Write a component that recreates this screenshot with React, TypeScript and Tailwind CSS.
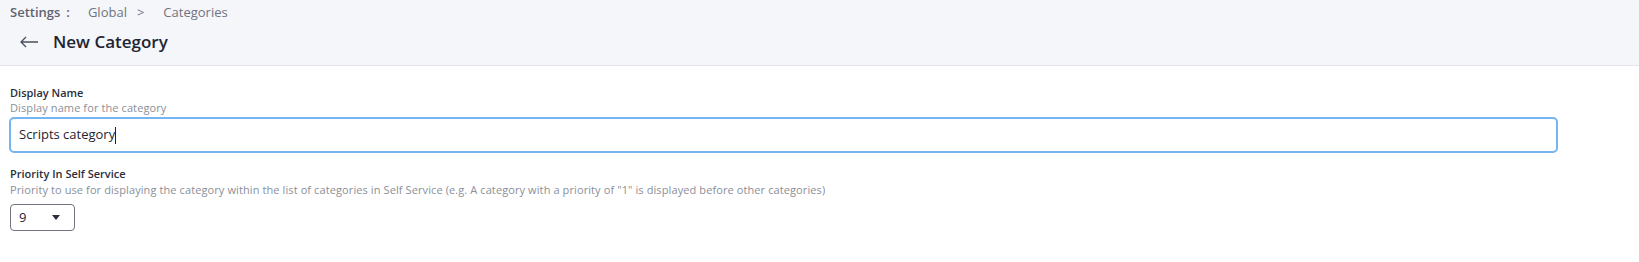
export default function App() {
  return (
    <div className="w-[1639px] h-[262px] bg-white text-[#1f2433]" style={{ fontFamily: '"Open Sans", "Lato", sans-serif' }}>
      {/* Page header */}
      <div className="h-[66px] bg-[#f5f6fa] border-b border-[#e3e5ea] px-[10px] pt-[3px]">
        <div className="flex items-center text-[13px] leading-[18px] text-[#6f7480]">
          <span className="font-semibold text-[#5f6470]">Settings</span>
          <span className="ml-[6px] font-semibold text-[#5f6470]">:</span>
          <span className="ml-[18px]">Global</span>
          <span className="ml-[10px]">&gt;</span>
          <span className="ml-[19px]">Categories</span>
        </div>
        <div className="flex items-center mt-[9px]">
          <svg width="20" height="12" viewBox="0 0 20 12" className="ml-[9px] text-[#4a4f5c]">
            <path d="M19 6H2M7 1L2 6l5 5" fill="none" stroke="currentColor" strokeWidth="1.3" />
          </svg>
          <h1 className="ml-[14px] text-[17px] leading-[24px] font-semibold text-[#1f2433]">New Category</h1>
        </div>
      </div>

      {/* Form */}
      <div className="px-[9px] pt-[20px]">
        <div className="text-[11px] leading-[14px] font-semibold text-[#2b2f3a] pl-[1px]">Display Name</div>
        <div className="text-[11px] leading-[15px] tracking-[0.1px] text-[#8a8f99] pl-[1px]">Display name for the category</div>
        <div className="mt-[2px] w-[1549px] h-[36px] border-2 border-[#75b5f4] rounded-[5px] flex items-center px-[8px]">
          <span className="text-[13px] text-[#1f2433]">Scripts category</span>
          <span className="w-px h-[17px] bg-[#1f2433]" />
        </div>

        <div className="mt-[14px] text-[11px] leading-[14px] font-semibold text-[#2b2f3a] pl-[1px]">Priority In Self Service</div>
        <div className="mt-[1px] text-[11px] leading-[15px] tracking-[0.1px] text-[#8a8f99] pl-[1px]">
          Priority to use for displaying the category within the list of categories in Self Service (e.g. A category with a priority of "1" is displayed before other categories)
        </div>
        <div className="mt-[7px] ml-[1px] w-[65px] h-[27px] border border-[#70757f] rounded-[4px] flex items-center justify-between pl-[8px] pr-[14px]">
          <span className="text-[13px] text-[#1f2433]">9</span>
          <svg width="8" height="5" viewBox="0 0 8 5">
            <path d="M0 0h8L4 5z" fill="#2b2f3a" />
          </svg>
        </div>
      </div>
    </div>
  );
}
